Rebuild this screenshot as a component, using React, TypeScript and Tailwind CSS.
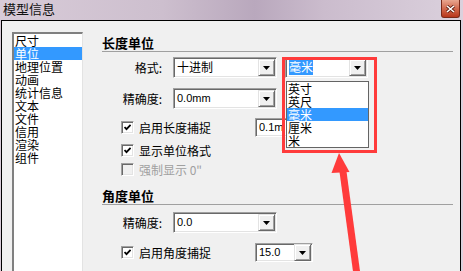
const cats = ["尺寸", "单位", "地理位置", "动画", "统计信息", "文本", "文件", "信用", "渲染", "组件"];
const units = ["英寸", "英尺", "毫米", "厘米", "米"];

const DownArrow = () => (
  <svg width="7" height="4" viewBox="0 0 7 4">
    <path d="M0 0h7L3.5 4z" fill="#000" />
  </svg>
);

const DropButton = () => (
  <div className="w-[17px] h-[17px] m-px flex items-center justify-center bg-[#f0f0f0] border border-t-[#e3e3e3] border-l-[#e3e3e3] border-r-[#696969] border-b-[#696969] shadow-[inset_1px_1px_0_#fff,inset_-1px_-1px_0_#a0a0a0]">
    <DownArrow />
  </div>
);

const Combo = ({ text, width, height = "h-[21px]" }: { text: React.ReactNode; width: string; height?: string }) => (
  <div
    className={`${width} ${height} flex items-center bg-white border border-t-[#a0a0a0] border-l-[#a0a0a0] border-r-white border-b-white shadow-[inset_1px_1px_0_#696969,inset_-1px_-1px_0_#e3e3e3]`}
  >
    <div className="flex-1 pl-[3px] text-[11px] leading-[17px] text-black font-['Liberation_Sans',sans-serif] whitespace-nowrap">
      {text}
    </div>
    <DropButton />
  </div>
);

const Check = ({ checked = true, disabled = false, label }: { checked?: boolean; disabled?: boolean; label: string }) => (
  <div className="flex items-center h-[13px]">
    <span
      className={`w-[13px] h-[13px] flex items-center justify-center border border-t-[#a0a0a0] border-l-[#a0a0a0] border-r-white border-b-white shadow-[inset_1px_1px_0_#696969,inset_-1px_-1px_0_#e3e3e3] ${
        disabled ? "bg-[#f0f0f0]" : "bg-white"
      }`}
    >
      {checked && (
        <svg width="7" height="7" viewBox="0 0 7 7">
          <path d="M0.5 3 L2.5 5.2 L6.6 0.8" stroke="#000" strokeWidth="1.8" fill="none" />
        </svg>
      )}
    </span>
    <span className={`ml-[5px] text-[12px] leading-[13px] ${disabled ? "text-[#a0a0a0]" : "text-black"}`}>{label}</span>
  </div>
);

const Heading = ({ title, top }: { title: string; top: string }) => (
  <>
    <div className={`${top} h-[16px] text-[13px] leading-[16px] font-bold text-black`}>{title}</div>
    <div className="h-px bg-[#a0a0a0]" />
  </>
);

export default function App() {
  return (
    <div className="relative w-[463px] h-[271px] overflow-hidden flex flex-col bg-[linear-gradient(90deg,#d8cbd8_0%,#cdbfce_35%,#b9a8bd_55%,#cbbccd_70%,#dbd1dd_100%)] font-['Noto_Sans_CJK_SC',sans-serif]">
      {/* Title bar */}
      <div className="h-[20px] shrink-0 flex justify-between items-start">
        <div className="pl-[3px] pt-[1px] text-[13px] leading-[16px] text-[#111]">模型信息</div>
        <div className="mr-[3px] w-[19px] h-[18px] rounded-b-[3px] border border-t-0 border-[#7a2a1a] bg-[linear-gradient(180deg,#e9a68f_0%,#d26a4f_50%,#b8361c_100%)] flex items-center justify-center">
          <svg width="9" height="8" viewBox="0 0 9 8">
            <path d="M1 1 L8 7 M8 1 L1 7" stroke="#5a1a0e" strokeWidth="3" />
            <path d="M1 1 L8 7 M8 1 L1 7" stroke="#fff" strokeWidth="1.6" />
          </svg>
        </div>
      </div>

      {/* Body */}
      <div className="flex-1 ml-px mr-[2px] border border-b-0 border-black bg-[#f0f0f0] flex pt-[11px] pl-[10px]">
        {/* Category list */}
        <div className="w-[71px] bg-white border-t-2 border-l-2 border-r border-t-[#808080] border-l-[#808080] border-r-[#e3e3e3] flex flex-col">
          {cats.map((c, i) => (
            <div
              key={c}
              className={`h-[13px] leading-[13px] text-[12px] pl-[1px] ${i === 1 ? "bg-[#3399ff] text-white" : "text-black"}`}
            >
              {c}
            </div>
          ))}
        </div>

        {/* Right panel */}
        <div className="ml-[19px] w-[351px] flex flex-col">
          <Heading title="长度单位" top="mt-[3px]" />

          <div className="mt-[5px] flex items-center">
            <div className="w-[61px] text-right text-[12px] leading-[13px] pr-[1px]">格式:</div>
            <div className="ml-[10px]">
              <Combo width="w-[104px]" text={<span className="text-[12px] font-['Noto_Sans_CJK_SC',sans-serif]">十进制</span>} />
            </div>
            <div className="ml-[8px]">
              <Combo
                width="w-[83px]"
                text={<span className="bg-[#3399ff] text-white text-[12px] font-['Noto_Sans_CJK_SC',sans-serif]">毫米</span>}
              />
            </div>
          </div>

          <div className="mt-[10px] flex items-center">
            <div className="w-[61px] text-right text-[12px] leading-[13px] pr-[1px]">精确度:</div>
            <div className="ml-[10px]">
              <Combo width="w-[104px]" text="0.0mm" />
            </div>
          </div>

          <div className="mt-[9px] h-[19px] flex items-center">
            <div className="ml-[19px] w-[134px]">
              <Check label="启用长度捕捉" />
            </div>
            <Combo width="w-[58px]" height="h-[19px]" text="0.1m" />
          </div>

          <div className="mt-[7px] ml-[19px]">
            <Check label="显示单位格式" />
          </div>
          <div className="mt-[6px] ml-[19px]">
            <Check label={'强制显示 0"'} checked={false} disabled />
          </div>

          <Heading title="角度单位" top="mt-[12px]" />

          <div className="mt-[7px] flex items-center">
            <div className="w-[61px] text-right text-[12px] leading-[13px] pr-[1px]">精确度:</div>
            <div className="ml-[10px]">
              <Combo width="w-[104px]" text="0.0" />
            </div>
          </div>

          <div className="mt-[10px] h-[19px] flex items-center">
            <div className="ml-[19px] w-[134px]">
              <Check label="启用角度捕捉" />
            </div>
            <Combo width="w-[58px]" height="h-[19px]" text="15.0" />
          </div>
        </div>
      </div>

      {/* Open dropdown list */}
      <div className="absolute left-[286px] top-[81px] w-[83px] bg-white border border-[#646464] flex flex-col">
        {units.map((u, i) => (
          <div
            key={u}
            className={`h-[13px] leading-[13px] text-[12px] pl-[1px] ${i === 2 ? "bg-[#3399ff] text-white" : "text-black"}`}
          >
            {u}
          </div>
        ))}
      </div>

      {/* Annotation: red box and arrow */}
      <div className="absolute left-[282px] top-[57px] w-[95px] h-[96px] border-[3px] border-[#ff3b3b]" />
      <svg className="absolute left-0 top-0" width="463" height="271" viewBox="0 0 463 271">
        <path d="M342.5 168 L357 275" stroke="#ff3b3b" strokeWidth="7" />
        <path d="M339 153 L349.5 172 L331.5 173 Z" fill="#ff3b3b" />
      </svg>
    </div>
  );
}
